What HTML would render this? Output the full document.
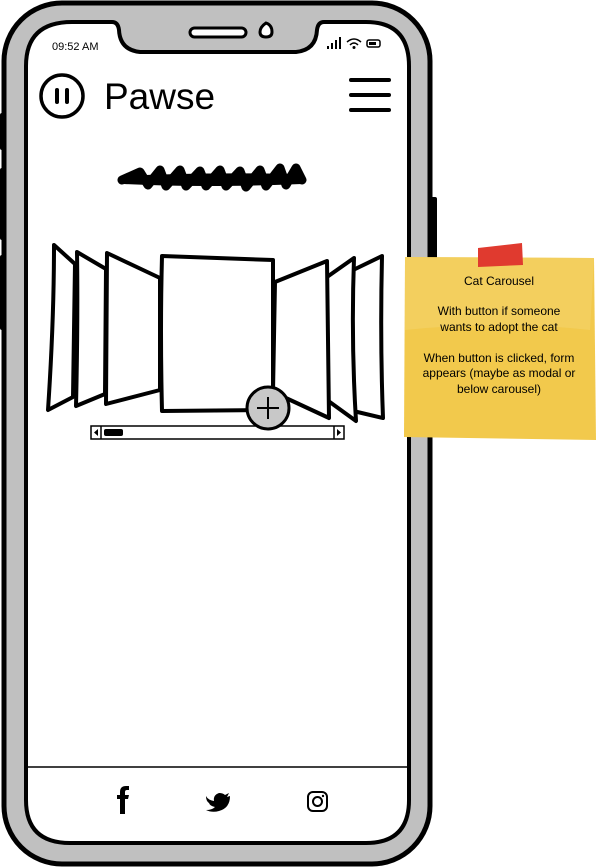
<!DOCTYPE html>
<html><head><meta charset="utf-8"><style>
html,body{margin:0;padding:0;background:#fff;}
body{width:597px;height:867px;overflow:hidden;position:relative;font-family:"Liberation Sans",sans-serif;}
svg{position:absolute;left:0;top:0;}
</style></head><body>
<svg width="597" height="867" viewBox="0 0 597 867" xmlns="http://www.w3.org/2000/svg">
<rect x="0" y="113" width="6" height="37" rx="2" fill="#000"/>
<rect x="0" y="168" width="6" height="72" rx="2" fill="#000"/>
<rect x="0" y="255" width="6" height="75" rx="2" fill="#000"/>
<rect x="429" y="197" width="8" height="62" rx="2" fill="#000"/>
<rect x="4" y="3" width="426" height="861" rx="58" fill="#c0c0c0" stroke="#000" stroke-width="5"/>
<path d="M72 22 H112 Q118 22 119 30 Q120 50 140 52 H296 Q316 50 317 30 Q318 22 324 22 H366 Q409 22 409 66 V800 Q409 843 366 843 H70 Q26 843 26 800 V66 Q26 22 72 22 Z" fill="#fff" stroke="#000" stroke-width="4"/>
<rect x="190" y="28" width="56" height="9" rx="4.5" fill="#fff" stroke="#000" stroke-width="3"/>
<path d="M266 23 Q272 25 272 32 Q272 37 266 37 Q260 37 260 32 Q260 27 266 23 Z" fill="#fff" stroke="#000" stroke-width="3"/>
<text x="52" y="50" font-size="11" fill="#000">09:52 AM</text>
<g fill="#000"><rect x="327" y="46" width="2" height="3"/><rect x="331" y="43" width="2" height="6"/><rect x="335" y="40" width="2" height="9"/><rect x="339" y="37" width="2" height="12"/></g>
<path d="M347 42 Q354 36 361 42 M350 45 Q354 41 358 45" fill="none" stroke="#000" stroke-width="1.5"/>
<circle cx="354" cy="47.5" r="1.5"/>
<rect x="367" y="40" width="13" height="7" rx="2" fill="none" stroke="#000" stroke-width="1.5"/><rect x="369" y="42" width="7" height="3" fill="#000"/>
<circle cx="62" cy="96" r="21" fill="none" stroke="#000" stroke-width="3.5"/>
<rect x="55" y="88" width="4" height="16" rx="2"/><rect x="65" y="88" width="4" height="16" rx="2"/>
<text x="104" y="109" font-size="37" fill="#000" font-family="Liberation Sans, sans-serif">Pawse</text>
<g stroke="#000" stroke-width="4" stroke-linecap="round"><line x1="351" y1="80" x2="389" y2="80"/><line x1="351" y1="95" x2="389" y2="95"/><line x1="351" y1="110" x2="389" y2="110"/></g>
<path d="M122 180 L140 172 L148 185 L160 170 L166 186 L180 170 L186 186 L200 171 L206 186 L220 170 L226 186 L240 171 L246 187 L260 170 L266 186 L280 168 L286 185 L296 168 L302 180" fill="none" stroke="#000" stroke-width="9" stroke-linejoin="round" stroke-linecap="round"/>
<path d="M124 176 Q200 172 300 174 L302 184 Q200 188 124 184 Z" fill="#000"/>
<g fill="#fff" stroke="#000" stroke-width="4" stroke-linejoin="round">
<path d="M382 256 L349 272 L349 410 L383 418 Q380 340 382 256 Z"/>
<path d="M354 258 L327 277 L327 400 L356 421 Q351 340 354 258 Z"/>
<path d="M327 261 L275 282 L273 392 L329 418 Z"/>
<path d="M54 245 L75 264 L73 397 L48 410 Q54 320 54 245 Z"/>
<path d="M77 252 L106 269 L105 394 L76 406 Q78 320 77 252 Z"/>
<path d="M107 253 L160 278 L160 390 L106 404 Z"/>
<path d="M162 256 L273 260 L273 410 L162 411 Q160 330 162 256 Z"/>
</g>
<rect x="91" y="426" width="253" height="13" fill="#fff" stroke="#000" stroke-width="1.5"/>
<line x1="101" y1="426" x2="101" y2="439" stroke="#000" stroke-width="1.5"/>
<line x1="334" y1="426" x2="334" y2="439" stroke="#000" stroke-width="1.5"/>
<path d="M98 429 L94 432.5 L98 436 Z M337 429 L341 432.5 L337 436 Z"/>
<rect x="104" y="429" width="19" height="7" rx="2"/>
<circle cx="268" cy="408" r="21" fill="#c8c8c8" stroke="#000" stroke-width="3"/>
<path d="M257 408 H279 M268 397 V419" stroke="#000" stroke-width="2"/>
<line x1="28" y1="767" x2="407" y2="767" stroke="#000" stroke-width="1.5"/>
<path d="M120 814 V799 H117 V795 H120 V792 Q120 786 126 786 H129 V790 H127 Q125 790 125 792 V795 H129 L128 799 H125 V814 Z"/>
<path d="M206 796 Q208 800 214 801 Q213 795 219 793 Q223 793 225 795 L229 793 L227 797 L230 796 Q230 808 219 811 Q212 813 206 810 Q212 810 215 807 Q210 806 209 803 Q206 801 206 796 Z"/>
<rect x="308" y="792" width="19" height="19" rx="5" fill="none" stroke="#000" stroke-width="2"/>
<circle cx="317.5" cy="801.5" r="4.5" fill="none" stroke="#000" stroke-width="2"/>
<circle cx="323" cy="796" r="1.2"/>
<path d="M405 257 L594 258 L596 440 L404 437 Z" fill="#f2c94c"/>
<path d="M405 257 L594 258 L590 330 Q500 320 405 330 Z" fill="#f4d36a" opacity="0.6"/>
<path d="M478 248 L522 243 L523 265 L478 267 Z" fill="#e03a2f"/>
<g font-size="12" fill="#000" text-anchor="middle" font-family="Liberation Sans, sans-serif">
<text x="499" y="285">Cat Carousel</text>
<text x="499" y="315">With button if someone</text>
<text x="499" y="331">wants to adopt the cat</text>
<text x="499" y="362">When button is clicked, form</text>
<text x="499" y="377">appears (maybe as modal or</text>
<text x="499" y="393">below carousel)</text>
</g>
</svg>
</body></html>
